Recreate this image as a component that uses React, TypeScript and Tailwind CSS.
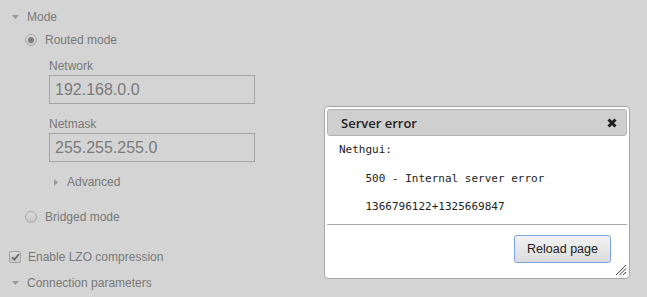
import React from "react";

const sans = { fontFamily: '"Liberation Sans", Arial, sans-serif' };

function DownCaret() {
  return (
    <svg width="7" height="4" viewBox="0 0 7 4" className="shrink-0">
      <path d="M0 0 H7 L3.5 4 Z" fill="#9a9a9a" />
    </svg>
  );
}

function RightCaret() {
  return (
    <svg width="4" height="7" viewBox="0 0 4 7" className="shrink-0">
      <path d="M0 0 V7 L4 3.5 Z" fill="#9a9a9a" />
    </svg>
  );
}

function Radio({ checked }: { checked?: boolean }) {
  return (
    <span className="flex h-[12px] w-[12px] shrink-0 items-center justify-center rounded-full border border-[#a9a9a9] bg-[linear-gradient(180deg,#dcdcdc,#c6c6c6)]">
      {checked ? <span className="h-[6px] w-[6px] rounded-full bg-[#7d7d7d]" /> : null}
    </span>
  );
}

function Checkbox() {
  return (
    <span className="flex h-[12px] w-[12px] shrink-0 items-center justify-center rounded-[2px] border border-[#a3a3a3] bg-[linear-gradient(180deg,#dcdcdc,#c8c8c8)]">
      <svg width="9" height="8" viewBox="0 0 9 8">
        <path d="M1 4.2 L3.4 6.6 L8 1" fill="none" stroke="#6a6a6a" strokeWidth="1.8" />
      </svg>
    </span>
  );
}

function FieldBox({ value }: { value: string }) {
  return (
    <div className="mt-[2px] flex h-[29px] w-[206px] items-center border border-[#a5a5a5] pl-[5px] text-[16px] text-[#7a7a7a]">
      {value}
    </div>
  );
}

export default function App() {
  return (
    <div
      className="relative h-[297px] w-[647px] overflow-hidden bg-[#d4d4d4] text-[12px] leading-[14px] text-[#787878]"
      style={sans}
    >
      {/* Faded form behind the overlay */}
      <div className="flex flex-col pt-[10px]">
        <div className="flex h-[14px] items-center gap-[8px] pl-[12px]">
          <DownCaret />
          <span>Mode</span>
        </div>

        <div className="mt-[9px] flex h-[14px] items-center gap-[8px] pl-[25px]">
          <Radio checked />
          <span>Routed mode</span>
        </div>

        <div className="flex flex-col pl-[49px]">
          <div className="mt-[12px] h-[14px]">Network</div>
          <FieldBox value="192.168.0.0" />
          <div className="mt-[13px] h-[14px]">Netmask</div>
          <FieldBox value="255.255.255.0" />
          <div className="mt-[13px] flex h-[14px] items-center gap-[9px] pl-[5px]">
            <RightCaret />
            <span>Advanced</span>
          </div>
        </div>

        <div className="mt-[21px] flex h-[14px] items-center gap-[8px] pl-[25px]">
          <Radio />
          <span>Bridged mode</span>
        </div>

        <div className="mt-[26px] flex h-[14px] items-center gap-[7px] pl-[9px]">
          <Checkbox />
          <span>Enable LZO compression</span>
        </div>

        <div className="mt-[12px] flex h-[14px] items-center gap-[8px] pl-[12px]">
          <DownCaret />
          <span>Connection parameters</span>
        </div>
      </div>

      {/* Error dialog */}
      <div className="absolute left-[324px] top-[106px] flex h-[173px] w-[306px] flex-col rounded-[4px] border border-[#a8a8a8] bg-white p-[2px]">
        <div className="flex h-[27px] items-center justify-between rounded-[3px] border border-[#b4b4b4] bg-[#cfcfcf] pl-[13px] pr-[9px]">
          <span
            className="text-[13px] font-semibold text-[#222]"
            style={{ fontFamily: '"Open Sans", "Noto Sans", sans-serif' }}
          >
            Server error
          </span>
          <svg width="10" height="10" viewBox="0 0 10 10">
            <path d="M1.5 1.5 L8.5 8.5 M8.5 1.5 L1.5 8.5" stroke="#1e1e1e" strokeWidth="3" />
          </svg>
        </div>

        <div className="h-[89px] border-b border-[#aaaaaa] pl-[12px] pt-[7px]">
          <pre
            className="text-[11px] leading-[14.25px] text-[#222]"
            style={{ fontFamily: '"DejaVu Sans Mono", monospace' }}
          >
            {"Nethgui:\n\n    500 - Internal server error\n\n    1366796122+1325669847"}
          </pre>
        </div>

        <div className="relative flex flex-1 justify-end pr-[16px] pt-[10px]">
          <button
            type="button"
            className="flex h-[28px] w-[97px] items-center justify-center rounded-[3px] border border-[#7aa3e6] bg-[linear-gradient(180deg,#f2f2f2,#dcdcdc)] text-[12.5px] text-[#222]"
          >
            Reload page
          </button>
          <svg
            width="12"
            height="12"
            viewBox="0 0 12 12"
            className="absolute bottom-[0px] right-[0px]"
          >
            <path d="M11 1 L1 11 M11 4.5 L4.5 11 M11 8 L8 11" stroke="#444" strokeWidth="1" />
          </svg>
        </div>
      </div>
    </div>
  );
}
